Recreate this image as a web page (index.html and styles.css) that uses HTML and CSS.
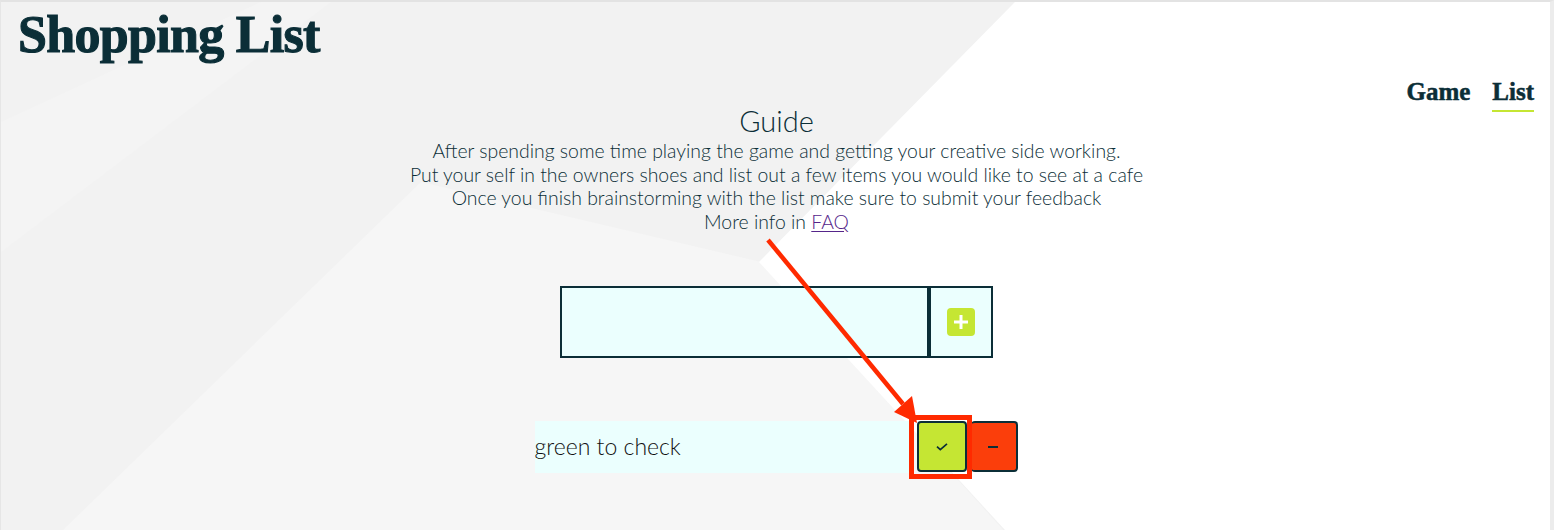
FILE: index.html
```html
<!DOCTYPE html>
<html lang="en">
<head>
<meta charset="utf-8">
<title>Shopping List</title>
<link rel="stylesheet" href="styles.css">
</head>
<body>
<div class="page">
  <div class="bg-band bg-band-1"></div>
  <div class="bg-band bg-band-2"></div>
  <div class="bg-white"></div>

  <header class="top">
    <h1 class="brand">Shopping List</h1>
    <nav class="nav">
      <a href="#" class="nav-link">Game</a>
      <a href="#" class="nav-link nav-link-active">List</a>
    </nav>
  </header>

  <main class="content">
    <section class="guide">
      <h2 class="guide-title">Guide</h2>
      <p class="guide-text">After spending some time playing the game and getting your creative side working.<br>
      Put your self in the owners shoes and list out a few items you would like to see at a cafe<br>
      Once you finish brainstorming with the list make sure to submit your feedback<br>
      More info in <a href="#" class="guide-link">FAQ</a></p>
    </section>

    <form class="add" onsubmit="return false">
      <input class="add-input" type="text" aria-label="New item">
      <div class="add-cell">
        <button class="add-btn" type="button" aria-label="Add"></button>
      </div>
    </form>

    <ul class="list">
      <li class="item">
        <span class="item-text">green to check</span>
        <button class="item-check" type="button" aria-label="Check">
          <svg width="12" height="8" viewBox="0 0 12 8"><path d="M1 3.6 L4.3 6.6 L11 0.9" fill="none" stroke="#0b2e37" stroke-width="1.7"/></svg>
        </button>
        <button class="item-remove" type="button" aria-label="Remove"><span class="minus"></span></button>
      </li>
    </ul>
  </main>

  <svg class="annot" width="1554" height="530" viewBox="0 0 1554 530">
    <line x1="768" y1="240" x2="903" y2="404" stroke="#ff2a00" stroke-width="4.5"/>
    <polygon points="917,423 894,412 912,396" fill="#ff2a00"/>
    <rect x="911.5" y="417.5" width="58" height="59" fill="none" stroke="#ff2a00" stroke-width="5"/>
  </svg>
</div>
</body>
</html>
```

FILE: styles.css
```css
html, body {
  margin: 0;
  padding: 0;
  background: #ffffff;
}

.page {
  position: relative;
  width: 1554px;
  height: 530px;
  overflow: hidden;
  box-sizing: border-box;
  background: #f2f2f2;
  border-top: 2px solid #e3e3e3;
  border-left: 1px solid #e6e6e6;
  border-right: 4px solid #ececec;
  font-family: Lato, "Open Sans", sans-serif;
  color: #0b2e37;
}

.bg-white {
  position: absolute;
  inset: 0;
  background: #ffffff;
  clip-path: polygon(1014px 0, 100% 0, 100% 100%, 1004px 100%, 758px 260px);
}

.bg-band {
  position: absolute;
  inset: 0;
  background: #f7f7f7;
}

.bg-band-1 {
  clip-path: polygon(0 120px, 260px 0, 330px 0, 0 250px);
  background: #f4f4f4;
}

.bg-band-2 {
  clip-path: polygon(60px 530px, 420px 180px, 760px 260px, 1004px 530px);
  background: #f6f6f6;
}

.top {
  position: relative;
  height: 102px;
  display: flex;
  justify-content: space-between;
  align-items: flex-start;
  padding: 0 16px 0 17px;
}

.brand {
  margin: 0;
  padding-top: 5px;
  font-family: "Liberation Serif", "DejaVu Serif", serif;
  font-weight: 700;
  font-size: 52px;
  line-height: 56px;
  letter-spacing: -0.7px;
  color: #0b2e37;
  -webkit-text-stroke: 1.1px #0b2e37;
}

.nav {
  display: flex;
  gap: 22px;
  padding-top: 76px;
}

.nav-link {
  font-family: "Liberation Serif", "DejaVu Serif", serif;
  font-weight: 700;
  font-size: 25px;
  line-height: 28px;
  color: #0b2e37;
  text-decoration: none;
  -webkit-text-stroke: 0.5px #0b2e37;
  padding-bottom: 4px;
}

.nav-link-active {
  border-bottom: 2px solid #c5e633;
}

.content {
  position: relative;
  padding-left: 2px;
}

.guide {
  text-align: center;
}

.guide-title {
  margin: 0;
  font-family: Lato, sans-serif;
  font-weight: 300;
  font-size: 29px;
  line-height: 34px;
  color: #0b2e37;
}

.guide-text {
  margin: 1px 0 0;
  font-family: Lato, sans-serif;
  font-weight: 300;
  font-size: 19.4px;
  line-height: 23.6px;
  color: #0b2e37;
}

.guide-link {
  color: #55258a;
  text-decoration: underline;
  text-underline-offset: 2px;
}

.add {
  display: flex;
  width: 433px;
  height: 72px;
  margin: 53px auto 0;
  box-sizing: border-box;
  border: 2px solid #0b2e37;
  background: #ebfffe;
}

.add-input {
  flex: 1;
  min-width: 0;
  margin: 0;
  padding: 0 10px;
  border: 0;
  border-right: 4px solid #0b2e37;
  background: transparent;
  outline: none;
}

.add-cell {
  width: 60px;
  display: flex;
  align-items: center;
  justify-content: center;
}

.add-btn {
  position: relative;
  width: 28px;
  height: 28px;
  margin: 0;
  padding: 0;
  border: 0;
  border-radius: 4px;
  background: #c5e633;
}

.add-btn::before,
.add-btn::after {
  content: "";
  position: absolute;
  left: 50%;
  top: 50%;
  background: #ffffff;
  transform: translate(-50%, -50%);
}

.add-btn::before {
  width: 14px;
  height: 3px;
}

.add-btn::after {
  width: 3px;
  height: 14px;
}

.list {
  list-style: none;
  width: 484px;
  margin: 63px auto 0;
  padding: 0;
}

.item {
  display: flex;
  align-items: flex-start;
  height: 52px;
}

.item-text {
  flex: 0 0 378px;
  height: 52px;
  background: #ebfffe;
  font-family: Lato, sans-serif;
  font-weight: 300;
  font-size: 23px;
  line-height: 50px;
  color: #111;
}

.item-check {
  display: flex;
  align-items: center;
  justify-content: center;
  width: 50px;
  height: 51px;
  margin: 0 0 0 4px;
  padding: 0;
  box-sizing: border-box;
  border: 2px solid #0b2e37;
  border-radius: 4px;
  background: #c5e633;
}

.item-remove {
  display: flex;
  align-items: center;
  justify-content: center;
  width: 47px;
  height: 51px;
  margin: 0 0 0 4px;
  padding: 0;
  box-sizing: border-box;
  border: 2px solid #0b2e37;
  border-left-width: 0;
  border-radius: 4px;
  background: #fb3e0b;
}

.minus {
  width: 10px;
  height: 2px;
  background: #0b2e37;
}

.annot {
  position: absolute;
  left: -1px;
  top: -2px;
  pointer-events: none;
}
```
